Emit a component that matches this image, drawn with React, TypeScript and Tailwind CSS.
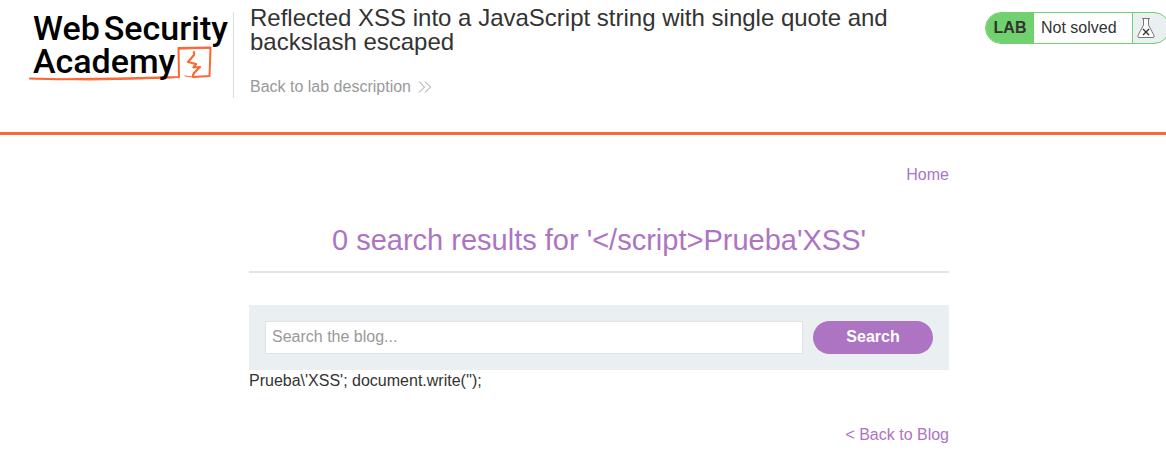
import React from "react";

function Logo() {
  return (
    <a
      href="#academy"
      aria-label="Web Security Academy"
      className="relative block w-[200px] shrink-0 pl-1 font-['Roboto',sans-serif] text-[34px] leading-[33px] font-medium text-black"
    >
      <svg
        className="absolute top-[34px] left-0"
        width="186"
        height="36"
        viewBox="0 0 186 36"
        fill="none"
        stroke="#ff6633"
        strokeWidth="2"
        strokeLinejoin="round"
        strokeLinecap="round"
        aria-hidden="true"
      >
        <path d="M1 32.400 L30 33.200 L90 32.600 L150 31 L149.500 2 L181.500 1.400 L180.500 30 L164 31" />
        <path d="M1 32.600 L60 34 L110 33 L144 31.800 M150 3.200 L166 2.600 L181 2.200 M164 31 L156 30" strokeWidth="1" />
        <path d="M165 6 L165 9 L159 16 L167 18 L164.500 21.500 L171 21 L165 27 L164 29.500" strokeWidth="2.200" />
      </svg>
      <span className="relative flex gap-1">
        <span>Web</span>
        <span>Security</span>
      </span>
      <span className="relative block">Academy</span>
    </a>
  );
}

function Flask() {
  return (
    <svg className="shrink-0" width="18" height="22" viewBox="0 0 18 22" fill="none" aria-hidden="true">
      <path
        d="M6.500 2 V8 L1 18.500 Q0.500 20.500 2 20.500 H16 Q17.500 20.500 17 18.500 L11.500 8 V2"
        fill="#fff"
        stroke="#777"
      />
      <path d="M5 1.500 H13" stroke="#777" />
      <path d="M6 12 L12 18 M12 12 L6 18" stroke="#333" strokeWidth="1.400" />
    </svg>
  );
}

function LabStatus() {
  return (
    <div className="-mr-1 flex h-8 shrink-0 overflow-hidden rounded-full border border-[#70d16e] bg-[#eaeff2]">
      <span className="flex w-12 items-center justify-center bg-[#70d16e] font-bold">LAB</span>
      <p className="flex w-[99px] items-center border-r border-[#70d16e] bg-white pl-[7px]">Not solved</p>
      <span className="flex w-9 items-center pl-1">
        <Flask />
      </span>
    </div>
  );
}

export default function App() {
  return (
    <div className="overflow-x-hidden bg-white font-['Liberation_Sans',Arial,sans-serif] text-base leading-[18px] text-[#333332]">
      <header className="flex items-start border-b-[3px] border-[#ff6633] pt-3 pb-[34px] pl-[29px]">
        <div className="h-[86px] border-r border-[#dddddd] pr-1">
          <Logo />
        </div>
        <div className="-mt-[6px] w-[680px] pl-4">
          <h2 className="text-2xl leading-6">
            Reflected XSS into a JavaScript string with single quote and backslash escaped
          </h2>
          <a href="#lab" className="mt-6 flex items-center gap-[7px] text-[#999999]">
            Back to lab description
            <svg width="13" height="12" viewBox="0 0 13 12" fill="none" stroke="#999999" aria-hidden="true">
              <path d="M1 0.500 L6.500 6 L1 11.500 M7 0.500 L12.500 6 L7 11.500" />
            </svg>
          </a>
        </div>
        <div className="ml-auto">
          <LabStatus />
        </div>
      </header>
      <main className="pt-[31px] pb-8 pl-8">
        <div className="mx-auto max-w-[700px]">
          <nav className="text-right text-[#ad74c3]">
            <a href="#home">Home</a>
          </nav>
          <h1 className="mt-[39px] border-b-2 border-[#e4e4e4] pb-[14px] text-center text-[29px] leading-[34px] text-[#ad74c3]">
            {"0 search results for '</script>Prueba'XSS'"}
          </h1>
          <form className="mt-8 flex gap-[10px] bg-[#eaeff2] p-4" onSubmit={(e) => e.preventDefault()}>
            <input
              type="text"
              name="search"
              aria-label="Search the blog"
              placeholder="Search the blog..."
              className="h-[33px] min-w-0 flex-1 border border-[#dfe3e5] bg-white px-[6px] pb-[2px] placeholder:text-[#999999]"
            />
            <button type="submit" className="h-[33px] w-[120px] rounded-full bg-[#ad74c3] pb-[2px] font-bold text-white">
              Search
            </button>
          </form>
          <p className="mt-[2px]">{"Prueba\\'XSS'; document.write('');"}</p>
          <div className="mt-9 text-right text-[#ad74c3]">
            <a href="#blog">{"< Back to Blog"}</a>
          </div>
        </div>
      </main>
    </div>
  );
}
